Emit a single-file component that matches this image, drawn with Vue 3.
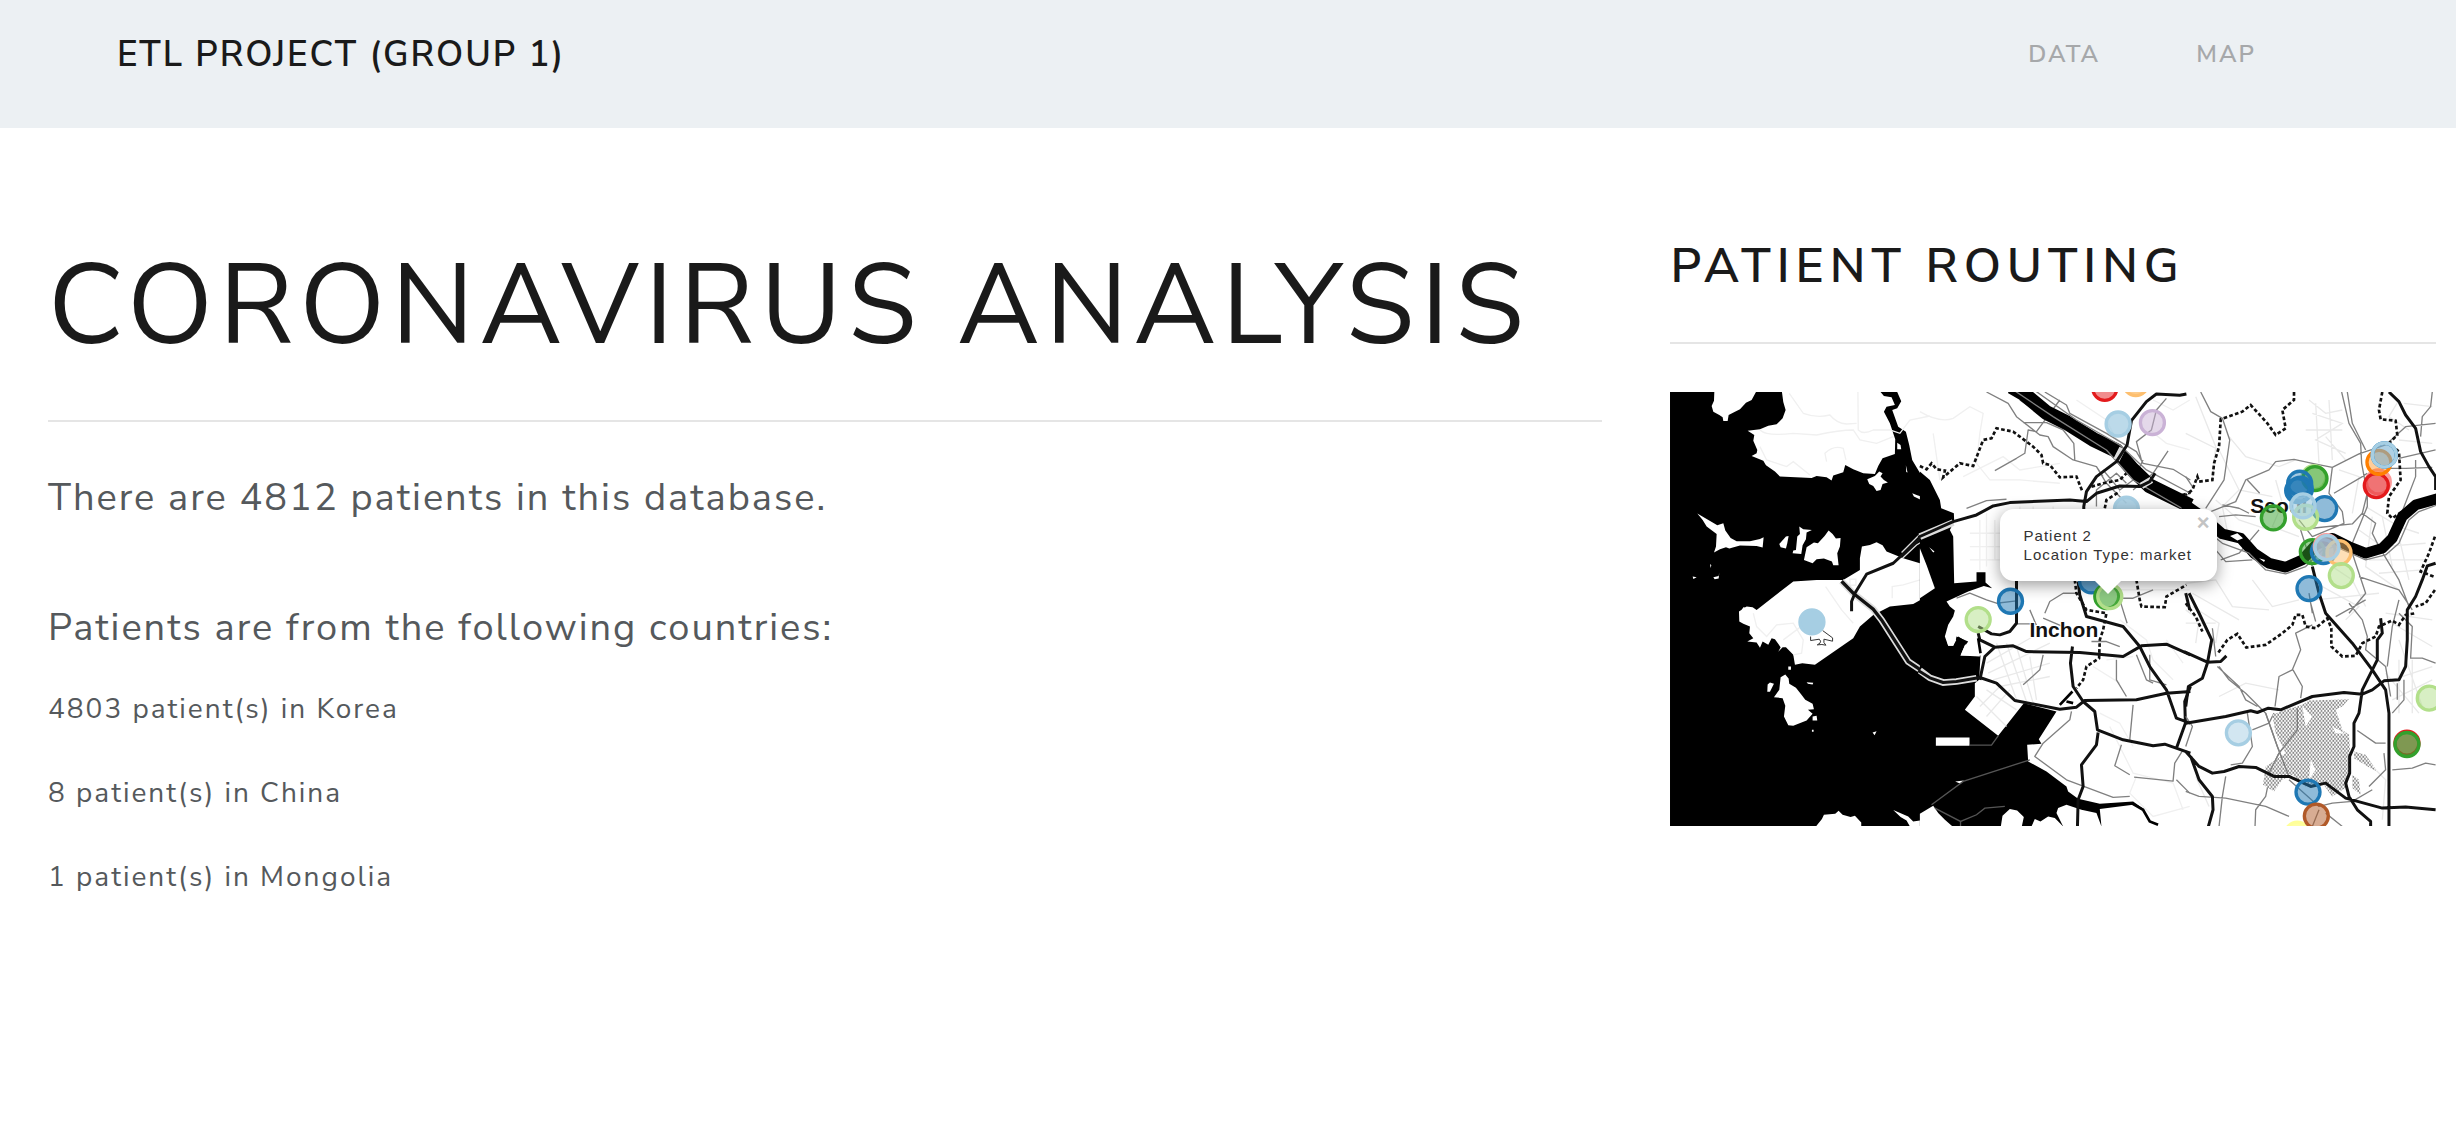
<script setup>
const links = [
  { label: 'Data', href: '#data' },
  { label: 'Map', href: '#map' },
]

const total = 4812

const countries = [
  { name: 'Korea', count: 4803 },
  { name: 'China', count: 8 },
  { name: 'Mongolia', count: 1 },
]

const sky = '#a6cee3'
const blue = '#1f78b4'
const lime = '#b2df8a'
const green = '#33a02c'
const pink = '#fb9a99'
const red = '#e31a1c'
const sand = '#fdbf6f'
const orange = '#ff7f00'
const lilac = '#cab2d6'
const yellow = '#ffff99'
const brown = '#b15928'

// x, y, colour, fill opacity
const markers = [
  [426, 690, sky, 1],
  [1305, -11, red, 0.5], [1398, -25, sand, 0.8], [1345, 96, sky, 0.75], [1448, 92, lilac, 0.5],
  [1370, 352, sky, 0.9], [1022, 628, blue, 0.5], [1265, 567, blue, 0.7],
  [1311, 614, green, 0.6], [1320, 614, lime, 0.15], [925, 683, lime, 0.5],
  [1933, 257, lime, 0.5], [1936, 260, green, 0.5], [1890, 274, blue, 0.4],
  [1892, 292, blue, 0.4], [1884, 296, blue, 0.7], [1965, 350, blue, 0.5],
  [1908, 376, lime, 0.5], [1900, 342, sky, 0.7], [1811, 378, green, 0.5],
  [1928, 479, green, 0.5], [1961, 479, blue, 0.5], [1970, 464, pink, 0.5],
  [2008, 482, sand, 0.5], [1972, 467, sky, 0.6],
  [2015, 551, lime, 0.5], [1918, 590, blue, 0.5],
  [2126, 270, pink, 0.5], [2120, 281, red, 0.5], [2128, 211, orange, 0.4],
  [2144, 189, sky, 0.5], [2144, 189, blue, 0.2], [2144, 189, sky, 0],
  [1706, 1023, sky, 0.5], [2279, 919, lime, 0.5],
  [2212, 1054, red, 0.5], [2212, 1058, green, 0.6],
  [1915, 1201, blue, 0.5], [1883, 1327, yellow, 0.9], [1940, 1273, brown, 0.5],
]
</script>

<template>
  <div class="page">
    <header class="navbar">
      <a class="brand" href="#">ETL Project (Group 1)</a>
      <nav class="links">
        <a v-for="link in links" :key="link.label" :href="link.href">{{ link.label }}</a>
      </nav>
    </header>

    <main class="content">
      <section>
        <h1>Coronavirus Analysis</h1>
        <hr />
        <p class="lead">There are {{ total }} patients in this database.</p>
        <p class="lead second">Patients are from the following countries:</p>
        <ul class="countries">
          <li v-for="c in countries" :key="c.name">{{ c.count }} patient(s) in {{ c.name }}</li>
        </ul>
      </section>

      <section>
        <h2>Patient Routing</h2>
        <hr />
        <div class="map">
          <svg viewBox="0 0 2298 1302" role="img" aria-label="Map of patient locations around Seoul and Inchon">
            <defs>
              <pattern id="dots" width="10" height="12" patternUnits="userSpaceOnUse">
                <rect width="10" height="12" fill="#fff" />
                <circle cx="3" cy="3" r="3" fill="#777" />
                <circle cx="8" cy="9" r="3" fill="#777" />
              </pattern>
            </defs>
            <rect width="2298" height="1302" fill="#fff" />

            <!-- western sea and its islands -->
            <g transform="translate(-30 -36)">
              <path d="M30 36H781V1340H30Z" fill="#000" />
              <g fill="#fff">
                <path d="M163 36 162 62 155 78 160 95 178 105 188 112 190 123 203 123 206 105 225 95 240 88 258 68 275 60 288 36Z" />
                <path d="M366 36 370 66 377 90 368 115 350 133 325 137 300 148 263 152 283 165 280 182 292 210 290 220 275 228 310 242 318 256 345 275 360 290 455 294 470 288 500 292 515 302 520 287 550 277 556 255 580 268 610 280 645 282 655 258 668 235 705 222 706 178 690 130 672 95 680 80 705 75 695 52 672 48 662 36Z" />
                <path d="M712 36 724 64 712 85 697 90 715 140 738 155 748 195 757 240 782 282 812 312 812 36Z" />
                <path d="M712 188 722 195 724 208 712 208ZM738 256l5 22-4-2Z" />
                <path d="M622 298 645 288 658 275 668 280 662 290 672 300 684 308 668 312 662 330 650 333 640 318 628 312Z" />
                <path d="M757 340 772 346 784 350 797 362 784 360 762 350Z" />
                <path d="M112 401 172 436 190 430 196 452 212 474 230 484 270 484 300 477 311 472 308 503 290 498 240 497 208 506 198 502 180 508 162 518 168 500 170 462 140 440 128 420Z" />
                <path d="M358 492 378 470 386 468 382 490 378 506 362 502Z" />
                <path d="M418 440 430 448 456 450 440 458 438 478 428 496 424 522 398 520 400 512 408 510 412 470 420 462Z" />
                <path d="M432 540 440 502 462 488 474 490 494 468 506 452 518 462 528 476 542 474 540 500 532 520 536 556 520 556 516 545 492 536 470 538 458 550Z" />
                <path d="M98 590 110 592 100 597ZM160 592 176 588 178 578 176 596 164 598ZM150 552l4 4-2 8Z" />
                <path d="M400 605 470 600 550 600 600 570 600 535 606 500 630 495 650 487 668 496 680 515 730 535 780 550 810 575 820 596 828 618 800 650 760 672 690 680 640 705 600 740 580 775 465 855 427 850 405 855 400 825 378 802 368 802 355 816 362 802 345 778 335 775 325 795 308 785 300 804 290 788 262 785 280 775 268 760 270 740 250 732 238 725 237 695 260 680 278 682 290 690Z" />
                <path d="M245 690 250 682 270 685 270 692ZM385 860h8v10h-8ZM440 907l20 2-2 5-14-2ZM638 1058l12-4-6 12ZM456 1050h5v6h-5ZM458 1010 470 1008 472 1022 458 1022Z" />
                <path d="M362 892 376 884 386 896 388 912 408 924 424 944 436 960 458 972 462 988 444 990 458 1002 440 1022 400 1038 385 1036 372 1010 376 978 368 955 342 952 358 930Z" />
                <path d="M323 914 330 908 342 912 330 936 322 936Z" />
                <path d="M468 1340 486 1318 492 1305 526 1302 536 1293 548 1305 572 1312 585 1308 604 1328 604 1340Z" />
                <path d="M700 1291 745 1310 760 1325 780 1322 812 1290 812 1340 750 1340 740 1322 722 1312Z" />
              </g>
              <path class="faint" d="M388 40 430 100Q470 115 510 105 530 130 560 132L590 130M594 36 595 150Q610 165 640 150L690 150 720 160 750 120 810 108M300 150Q320 170 400 160L470 165Q540 150 580 150L600 180 650 190 700 170M500 245 495 220Q520 195 550 205L558 240M300 200 320 240 380 260 400 245 450 285M497 620 545 690 580 730M570 598h18v18h-18ZM697 655V620L730 615 780 600 810 620M280 700 290 740 320 770 350 735 400 730 430 780 425 820 400 825M370 780 430 735" />
              <path d="M545 604 580 640 640 688 665 720 745 845 812 890" class="cased-edge" />
              <path d="M545 604 580 640 640 688 665 720 745 845 812 890" class="cased-core" />
              <path d="M810 455 770 485 700 550 620 583 585 640 575 665V694" class="road" />
              <path d="M810 450 785 458 725 518M812 470 770 495 728 535" class="light-line" />
              <path d="M452 770 452 782 478 778 482 784 480 790 472 795 486 794 498 796 492 788 492 778 518 784 518 774 488 752" fill="#fff" stroke="#333" stroke-width="3" />
            </g>

            <!-- Inchon coast -->
            <g transform="translate(750 -36)">
              <path d="M0 275 30 300 60 360 64 385 102 400 103 425 90 450 100 470 103 610 170 605 170 577 197 577 197 608 217 625 192 618 145 635 80 665 90 680 105 692 100 710 85 735 75 770 85 798 100 798 115 770 140 785 122 827 182 827 178 900 165 910 165 950 135 990 235 1068 312 970 410 995 357 1078 365 1092 322 1095 325 1145 380 1175 440 1220 445 1235 475 1257 540 1272 640 1265 675 1290 640 1275 540 1288 545 1340 530 1300 485 1290 440 1275 415 1285 410 1300 430 1340H0Z" fill="#000" />
              <path d="M78 768 105 710 132 690 178 740 180 830 122 827 140 785 112 765 100 798 85 798Z" fill="#fff" />
              <path d="M110 770 145 785 138 795 108 780Z" fill="#000" />
              <g fill="#fff">
                <path d="M0 505 20 555 45 625 0 655Z" />
                <path d="M48 1073H149V1098H48ZM106 1205 132 1202 122 1212ZM28 502 44 515 40 518Z" />
                <path d="M0 1302 40 1278 55 1300 75 1320 98 1340H0ZM243 1340 248 1308 270 1288 292 1292 312 1312 306 1340ZM335 1340 345 1318 362 1325 385 1310 405 1315 430 1340Z" />
              </g>
              <path class="faint" d="M0 95Q60 130 100 115L150 80 190 100 180 160 170 250 210 300 300 300 420 310M40 160 60 300M130 290 250 230 300 270 420 250M180 420V570M200 400V560M225 420V540M150 460H260M150 500H250M150 540H240M300 380V420M340 380V400M400 380V400M690 150 740 190 810 210M700 60 760 90 810 60M470 60 560 120 600 200M560 630H810M600 720 680 780 700 840 760 900M740 780 790 850M560 840 640 830M520 860 600 910M540 1000 600 1030 640 1100M570 1040 640 1180 760 1210 790 1290M650 1190 630 1240 700 1310 810 1280" />
              <path class="faint grid" d="M200 850 340 770M205 880 390 790M220 900 390 850M240 920 390 890M230 790 290 960M260 790 320 965M290 800 340 970M330 830 350 960M170 950 260 1040M200 930 290 990M180 980 240 920M200 1010 270 930" />
              <path class="thin" d="M200 36 265 70 290 110 360 165 385 170 400 200 460 240 530 260 550 290M225 272 290 235 315 220 325 150 350 155 420 60M140 385 200 362 260 358M310 128H380L430 150 462 190 465 240M300 60 390 120M375 36 440 75 450 100 560 160 650 215 670 250 760 268 812 300M745 213 700 280 640 330M740 55 710 90 695 150 650 185 665 240M110 655 150 640 200 660 230 670 290 663M375 700 390 665 430 640 470 640M610 655 640 655 700 630M600 660 622 730M330 690 360 760M370 715 430 740M290 732H340M550 270 600 330 640 300 670 240M530 260 560 310 620 370M530 380V330L590 280 620 310M690 825 690 900 740 915M515 785 560 785 600 800M650 825 680 900 700 910M590 840 590 900 620 950M640 975 630 1080M605 1095 585 1158 630 1185M643 1192 760 1204 765 1150 790 1110M455 995 450 1020 370 1090 345 1130 440 1200 580 1253 630 1250M770 1200 810 1240M370 825 360 870 310 915" />
              <path d="M35 1275 130 1205 330 1140M150 1096 215 1096 235 1068M45 1285 122 1325 170 1305 195 1285 255 1280M122 1325V1340" fill="none" stroke="#555" stroke-width="4" />
              <path class="border" d="M0 258 20 268 35 250 50 268 75 272 70 292 120 250 160 258 190 180 215 175 230 145 280 155 340 200 365 225 370 250 390 255 420 292 470 290 488 335M555 385 560 360 600 335M515 320 550 310 600 300 640 260M770 350 812 338M465 600 470 640 500 690 560 700 550 750 540 780 538 835 500 860 490 900 470 925M650 600 660 660 665 680 735 682 740 650 800 615" />
              <path d="M275 20 310 40 380 98 440 128 520 178 590 212 635 265 690 318 812 378" fill="none" stroke="#000" stroke-width="44" stroke-linejoin="round" />
              <path d="M278 28 400 110 560 210 640 300 812 400M340 28 470 120 600 195 680 270 812 340" class="thin" />
              <path class="cased-edge" d="M0 470 100 428 M0 872 30 894 70 908 110 905 170 895 M665 318 695 300M590 240 608 205" />
              <path class="road" d="M-5 472 100 425 170 405 220 378 270 368 450 360 500 365 530 340 600 318 660 320 690 305 706 280M800 42 780 46 710 42 680 65 635 122 622 195 590 245 530 290 500 335 492 380V395M290 560V730L270 755 240 765 215 762 175 740M475 605 480 645 500 710 610 740 660 800 690 860 740 930 770 1015 812 1030M175 760 180 780 225 802 280 798 320 815 480 818 610 830 665 798 740 793 812 825M225 802 195 830 180 900M-5 872 30 894 70 908 110 905 180 893 230 910 285 962 420 988 470 982 495 962 650 960 740 940 812 935M458 800 452 850 460 920 490 965 525 995 533 1050 610 1080 700 1098 735 1093 812 1120M535 1058 530 1095 485 1155 490 1220 475 1260 473 1340M812 920 795 965 797 1030 770 1105" />
              <path d="M420 975 458 935M440 965 460 970M635 1270 670 1290 690 1325 715 1335M175 775 182 820" fill="none" stroke="#000" stroke-width="8" />
            </g>

            <!-- Seoul -->
            <g transform="translate(1548 -36)">
              <path class="faint grid" d="M30 50 90 200 80 300M0 160 100 210 160 330 260 350M130 170 180 230 280 260 330 240M370 60 420 100 470 90M380 100 470 130 390 180 480 220M390 70 400 250M430 60 440 240M360 150H470M420 170 480 240M640 60 610 110 670 150M655 70 740 80M640 180 740 190M90 360 160 420 250 450M130 480 110 380 160 330M270 300 290 370 260 440 340 470M460 270 520 290 500 400M540 380 640 440 700 460M560 410 540 560 640 630M590 410 620 560M640 470 670 600M520 450 590 500 720 490M550 540H720M580 580 710 570M0 610 90 600 140 680 250 690M20 640 160 720M200 600 260 680 340 660M410 620 520 680 480 720M440 560 500 600 540 680M390 660 580 640M0 690 40 720 30 790M20 680 100 730 90 790M0 730H90M600 700 740 720M620 730 740 800M640 780 710 980M620 900 740 860M620 960 740 900M600 880 700 1000M640 840V1000M680 840V1000M540 1140 600 1200 590 1320M30 1190 70 1280M100 950 180 910 280 930" />
              <path class="thin" d="M45 36 75 95 110 115 132 180 115 300 60 385M0 290 20 320M75 395 150 365 180 300 250 270 270 245 325 238 380 250 440 262 520 222 600 195 660 140 750 130M185 300 222 340M110 375 160 385 190 400M440 262 430 340 470 395 475 430 380 470 340 420M445 340 530 290 545 280M545 345 545 380 500 490M468 36 490 130 525 190 528 250 545 340 530 400 500 432 380 445M485 36 500 130 540 210M740 36 735 80 710 110 705 170M640 235 750 210M600 265H660L740 262M690 240 690 290 640 420 640 450M530 400 570 430 560 460 580 500 640 600 670 680M345 450 380 560M105 540 160 520 220 450M100 410 150 405 210 410M30 440 120 545 200 540M520 590 640 630 680 690M490 700 540 640 500 520M370 640 380 700M450 710 540 660M490 670 530 720 545 770 540 810 600 860 615 950M375 670 390 725M380 735 330 760 345 810 320 870 280 890 268 980M322 870 350 920 345 955M80 745 90 830M95 860 160 920 180 960 215 980M100 860 130 900 180 940 240 1000 275 1100 310 1190M335 985V1050L280 1120 250 1180M200 1050 250 1030 265 1000M185 1000 200 1100 170 1150 135 1155M0 1235 40 1250 120 1255 240 1280 310 1310M120 1190 110 1250 100 1340M250 1200 240 1250 210 1290 208 1340M515 1052 570 1090 600 1090M620 1170 680 1165 720 1150 750 1155M550 1220 600 1170 595 1120M310 1200 400 1280 440 1270 500 1265 560 1230M400 1290 380 1340M420 1300 470 1340M640 700 680 740 675 835 710 835 750 850M655 900V960L620 1000M635 910V960M640 660 620 740 605 860M0 1010 20 1040 0 1100" />
              <path class="border" d="M325 36 325 60 290 90 300 145 270 165 245 130 195 75 170 95 105 118 100 200 85 250 80 300 40 305 35 290 20 330 0 345M590 36 580 90 585 118 630 122 635 165 610 190 640 215 645 300 610 350 605 400 620 415 650 395M748 470 730 520 705 575 745 590M748 630 720 670 690 680M0 670 30 710 50 755M98 818 125 780 155 762 182 803 240 795 290 760 320 735 330 705 350 705 360 740 390 745 425 715 437 745 437 800 470 830 510 828 530 790 570 770 580 740 620 722 640 735 660 705 690 700" />
              <path d="M-5 372 50 410 110 462 165 475 205 520 250 550 300 562 350 540 390 495 440 475 490 500 540 520 590 505 620 475 650 410 690 375 760 355" fill="none" stroke="#000" stroke-width="32" stroke-linejoin="round" />
              <path d="M-5 395 60 450 110 490 190 520 240 570 300 582 360 560 410 510 450 500 540 540 600 525 640 490 670 420 700 395 755 375" class="thin" />
              <path d="M133 468 155 460 172 475 155 482ZM220 535 238 540 235 546Z" fill="#fff" />
              <path d="M260 1005 300 990 350 975 370 962 490 958 470 980 450 990 470 1050 490 1065 495 1130 485 1220 440 1250 410 1210 360 1220 320 1185 290 1200 265 1235 232 1215 240 1160 300 1120 270 1060ZM505 1115 540 1125 575 1175 555 1165 530 1150 505 1135ZM500 1185 520 1200 525 1245 500 1225Z" fill="url(#dots)" />
              <path d="M350 980 380 1010 360 1040ZM375 1140 390 1170 370 1200ZM440 1040 480 1062 450 1060Z" fill="#fff" />
              <path class="thin" d="M335 985V1050L280 1120 250 1180M240 1000 275 1100 310 1190" />
              <path class="road" d="M610 36 640 65 660 105 690 145 705 215 730 260 750 290V330M10 640 40 700 78 780 65 850 50 895 8 920 0 980M-5 815 65 847 105 845 122 828M380 560 400 640 420 700 500 790 560 870 600 930 610 1000V1340M585 715 590 760 575 780 575 840 530 930 520 1000 505 1030 505 1100 492 1130 492 1180 480 1210 490 1250 515 1290 555 1325V1340M750 550 725 558 710 600 690 650 665 690V780L660 860 640 900 595 903 560 930 530 943 475 938 380 950 285 990 248 985 215 998 195 993 120 1010 0 1030M0 1115 40 1160 80 1180 115 1175 160 1160 210 1163 265 1190 310 1190 375 1220 420 1210 480 1255 590 1285 660 1282 750 1290M15 1130 40 1200 80 1250 82 1290 68 1340" />
              <path d="M0 640 12 690" class="road" />
            </g>

            <text class="place" x="1742" y="362">Seoul</text>
            <text class="place" x="1079" y="736">Inchon</text>

            <circle
              v-for="([x, y, colour, opacity], i) in markers"
              :key="i"
              :cx="x"
              :cy="y"
              r="36"
              :fill="colour"
              :fill-opacity="opacity"
              :stroke="colour"
              stroke-width="10"
            />
          </svg>
          <div class="popup" role="dialog" aria-label="Patient details">
            <div>Patient 2</div>
            <div>Location Type: market</div>
            <button type="button" aria-label="Close">×</button>
          </div>
        </div>
      </section>
    </main>
  </div>
</template>

<style>
body {
  background: #fff;
}
</style>

<style scoped>
.page {
  font-family: "Nunito Sans", Nunito, Lato, sans-serif;
  color: #55595c;
  letter-spacing: 2px;
}

.navbar {
  display: flex;
  align-items: center;
  justify-content: space-between;
  padding: 33px 200px 52px 117px;
  background: #ecf0f3;
  text-transform: uppercase;
}

.brand {
  font-size: 35px;
  line-height: 43px;
  font-weight: 600;
  color: #1a1a1a;
  text-decoration: none;
}

.links {
  display: flex;
  gap: 96px;
}

.links a {
  font-size: 24px;
  line-height: 31px;
  font-weight: 600;
  color: #a6a8aa;
  text-decoration: none;
}

.content {
  display: grid;
  grid-template-columns: 67fr 33fr;
  gap: 68px;
  padding: 104px 20px 0 48px;
}

h1,
h2 {
  margin: 0;
  color: #1a1a1a;
  text-transform: uppercase;
  letter-spacing: 6px;
}

h1 {
  padding-top: 8px;
  font-size: 112px;
  line-height: 134px;
  font-weight: 400;
}

h2 {
  padding-top: 2px;
  font-size: 48px;
  line-height: 64px;
  font-weight: 600;
}

hr {
  margin: 46px 0 52px;
  border: 0;
  border-top: 2px solid #e5e5e5;
}

h2 + hr {
  margin: 44px 0 48px;
}

.lead {
  margin: 0;
  font-size: 38px;
  line-height: 48px;
  font-weight: 400;
}

.second {
  margin-top: 82px;
}

.countries {
  display: flex;
  flex-direction: column;
  gap: 42px;
  margin: 36px 0 0;
  padding: 0;
  list-style: none;
  font-size: 28px;
  line-height: 42px;
  font-weight: 400;
}

.map {
  position: relative;
}

.map svg {
  display: block;
  width: 100%;
}

.faint {
  fill: none;
  stroke: #f0f0f0;
  stroke-width: 4;
}

.grid {
  stroke: #e9e9e9;
}

.thin {
  fill: none;
  stroke: #808080;
  stroke-width: 4;
  stroke-linejoin: round;
}

.road {
  fill: none;
  stroke: #111;
  stroke-width: 9;
  stroke-linejoin: round;
}

.border {
  fill: none;
  stroke: #111;
  stroke-width: 8;
  stroke-dasharray: 11 7;
}

.light-line {
  fill: none;
  stroke: #ddd;
  stroke-width: 4;
}

.cased-edge {
  fill: none;
  stroke: #ddd;
  stroke-width: 20;
}

.cased-core {
  fill: none;
  stroke: #111;
  stroke-width: 10;
}

.place {
  font: bold 63px "Liberation Sans", sans-serif;
  letter-spacing: 0;
  fill: #111;
  stroke: #fff;
  stroke-width: 6px;
  paint-order: stroke;
}

.popup {
  position: absolute;
  left: 43%;
  top: 27%;
  box-sizing: border-box;
  width: 217px;
  padding: 17px 0 17px 24px;
  border-radius: 14px;
  background: #fff;
  box-shadow: 0 4px 16px rgba(0, 0, 0, 0.4);
  font: 15px/19px "Liberation Sans", sans-serif;
  letter-spacing: 1px;
  color: #333;
  white-space: nowrap;
}

.popup::after {
  content: "";
  position: absolute;
  left: 95px;
  top: 100%;
  border: 13px solid transparent;
  border-top-color: #fff;
  border-bottom: 0;
}

.popup button {
  position: absolute;
  top: 4px;
  right: 7px;
  padding: 0;
  border: 0;
  background: none;
  color: #c3c3c3;
  font: bold 22px/20px "Liberation Sans", sans-serif;
}
</style>
